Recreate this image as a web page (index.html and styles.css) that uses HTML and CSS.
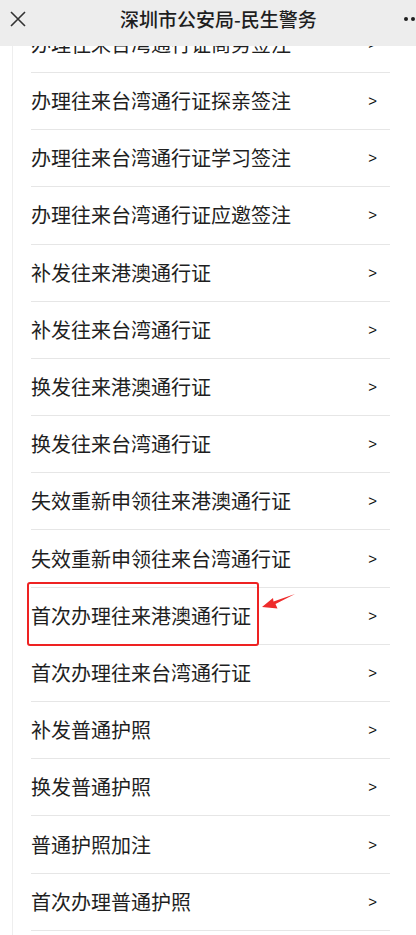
FILE: index.html
```html
<!DOCTYPE html>
<html lang="zh-CN">
<head>
<meta charset="utf-8">
<title>深圳市公安局-民生警务</title>
<link rel="stylesheet" href="styles.css">
</head>
<body>
<header class="topbar">
  <svg class="close" width="16" height="16" viewBox="0 0 16 16"><path d="M1 1 L15 15 M15 1 L1 15" stroke="#333" stroke-width="1.6" fill="none"/></svg>
  <div class="title">深圳市公安局-民生警务</div>
  <div class="menu"><span></span><span></span><span></span></div>
</header>
<main class="panel">
  <div class="row"><span class="label">办理往来台湾通行证商务签注</span><span class="chev">&gt;</span></div>
  <div class="row"><span class="label">办理往来台湾通行证探亲签注</span><span class="chev">&gt;</span></div>
  <div class="row"><span class="label">办理往来台湾通行证学习签注</span><span class="chev">&gt;</span></div>
  <div class="row"><span class="label">办理往来台湾通行证应邀签注</span><span class="chev">&gt;</span></div>
  <div class="row"><span class="label">补发往来港澳通行证</span><span class="chev">&gt;</span></div>
  <div class="row"><span class="label">补发往来台湾通行证</span><span class="chev">&gt;</span></div>
  <div class="row"><span class="label">换发往来港澳通行证</span><span class="chev">&gt;</span></div>
  <div class="row"><span class="label">换发往来台湾通行证</span><span class="chev">&gt;</span></div>
  <div class="row"><span class="label">失效重新申领往来港澳通行证</span><span class="chev">&gt;</span></div>
  <div class="row"><span class="label">失效重新申领往来台湾通行证</span><span class="chev">&gt;</span></div>
  <div class="row marked">
    <span class="label">首次办理往来港澳通行证</span><span class="chev">&gt;</span>
    <span class="highlight"></span>
    <svg class="arrow" width="40" height="22" viewBox="0 0 40 22"><polygon points="2,17 13,8 13.5,11.5 35,4 15.5,14 17.5,18.5" fill="#ee2b2b"/></svg>
  </div>
  <div class="row"><span class="label">首次办理往来台湾通行证</span><span class="chev">&gt;</span></div>
  <div class="row"><span class="label">补发普通护照</span><span class="chev">&gt;</span></div>
  <div class="row"><span class="label">换发普通护照</span><span class="chev">&gt;</span></div>
  <div class="row"><span class="label">普通护照加注</span><span class="chev">&gt;</span></div>
  <div class="row"><span class="label">首次办理普通护照</span><span class="chev">&gt;</span></div>
</main>
</body>
</html>
```
FILE: styles.css
```css
html, body {
  margin: 0;
  padding: 0;
  background: #ffffff;
}
body {
  font-family: "Noto Sans CJK SC", "Noto Sans", sans-serif;
  color: #1f1f1f;
  overflow: hidden;
  height: 935px;
}
.topbar {
  position: fixed;
  top: 0;
  left: 0;
  width: 100%;
  height: 46px;
  box-sizing: border-box;
  padding-bottom: 8px;
  background: #ededed;
  display: flex;
  align-items: center;
  overflow: hidden;
  z-index: 10;
}
.close {
  margin-left: 10px;
  flex: none;
}
.title {
  margin-left: 94px;
  font-size: 19px;
  font-weight: 500;
  color: #1e1e1e;
  white-space: nowrap;
  line-height: 24px;
}
.menu {
  margin-left: auto;
  margin-right: -6px;
  display: flex;
  gap: 3px;
  flex: none;
}
.menu span {
  width: 4px;
  height: 4px;
  border-radius: 50%;
  background: #1e1e1e;
}
.panel {
  margin: 15.8px 26px 0 12px;
  border-left: 1px solid #eeeeee;
  padding-left: 18px;
  height: 919.2px;
  box-sizing: border-box;
}
.row {
  position: relative;
  height: 56.2px;
  border-bottom: 1px solid #e6e6e6;
  display: flex;
  align-items: center;
  justify-content: space-between;
  padding-right: 13px;
}
.label {
  font-size: 20px;
  line-height: 28px;
  color: #1f1f1f;
  white-space: nowrap;
}
.chev {
  font-family: "Liberation Sans", Arial, sans-serif;
  font-size: 15px;
  color: #111;
  line-height: 20px;
}
.highlight {
  position: absolute;
  left: -4px;
  top: -5.5px;
  width: 232px;
  height: 64px;
  box-sizing: border-box;
  border: 2.5px solid #ee2222;
  border-radius: 3px;
}
.arrow {
  position: absolute;
  left: 229px;
  top: 2px;
}
```
